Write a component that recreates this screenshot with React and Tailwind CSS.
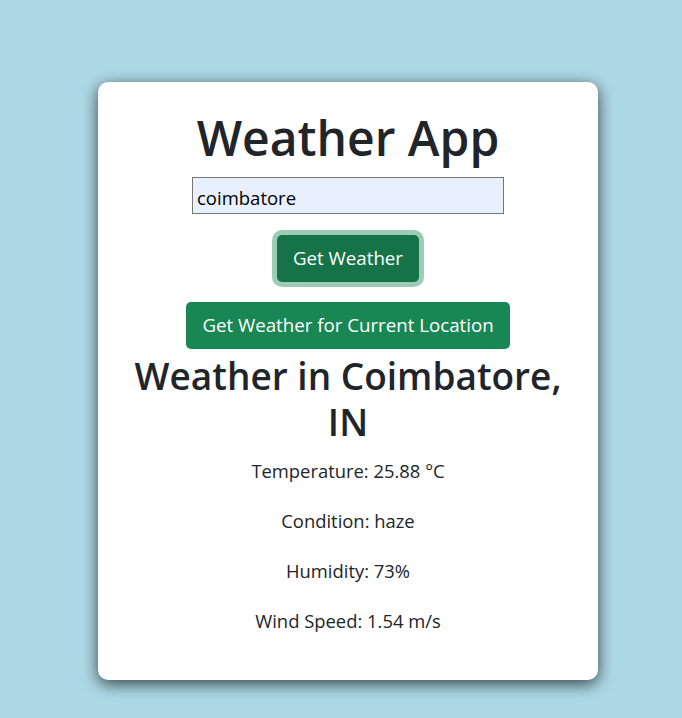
import React, { useState } from "react";

function App() {
  const [city, setCity] = useState("coimbatore");

  const stats = [
    "Temperature: 25.88 °C",
    "Condition: haze",
    "Humidity: 73%",
    "Wind Speed: 1.54 m/s",
  ];

  return (
    <div className="min-h-[718px] bg-[#add8e6] font-['Open_Sans',sans-serif] text-[#212529]">
      <div className="flex justify-center pl-[14px] pt-[82px]">
        {/* Card */}
        <div className="w-[500px] bg-white rounded-[10px] shadow-[0_4px_16px_rgba(0,0,0,0.7)] px-5 pt-[28px] pb-[46px] flex flex-col items-center text-center">
          <h1 className="text-[48px] font-semibold leading-[55px]">Weather App</h1>

          <input
            value={city}
            onChange={(e) => setCity(e.target.value)}
            className="mt-[12px] w-[312px] h-[37px] bg-[#e8f0fe] border border-[#767676] px-1 pt-[3px] text-[18.5px] text-black outline-none"
          />

          {/* focused button */}
          <button className="mt-[21px] h-[47px] px-4 bg-[#157347] text-white text-[18.7px] rounded-[5px] shadow-[0_0_0_5px_rgba(60,153,110,0.5)]">
            Get Weather
          </button>

          <button className="mt-[20px] h-[47px] px-4 bg-[#198754] text-white text-[18.7px] rounded-[5px]">
            Get Weather for Current Location
          </button>

          <h2 className="mt-[4px] text-[37px] font-semibold leading-[46px] w-[450px]">
            Weather in Coimbatore, IN
          </h2>

          <div className="mt-[12px] flex flex-col gap-[23px]">
            {stats.map((s) => (
              <p key={s} className="text-[18.4px] leading-[27px]">
                {s}
              </p>
            ))}
          </div>
        </div>
      </div>
    </div>
  );
}

export default App;
